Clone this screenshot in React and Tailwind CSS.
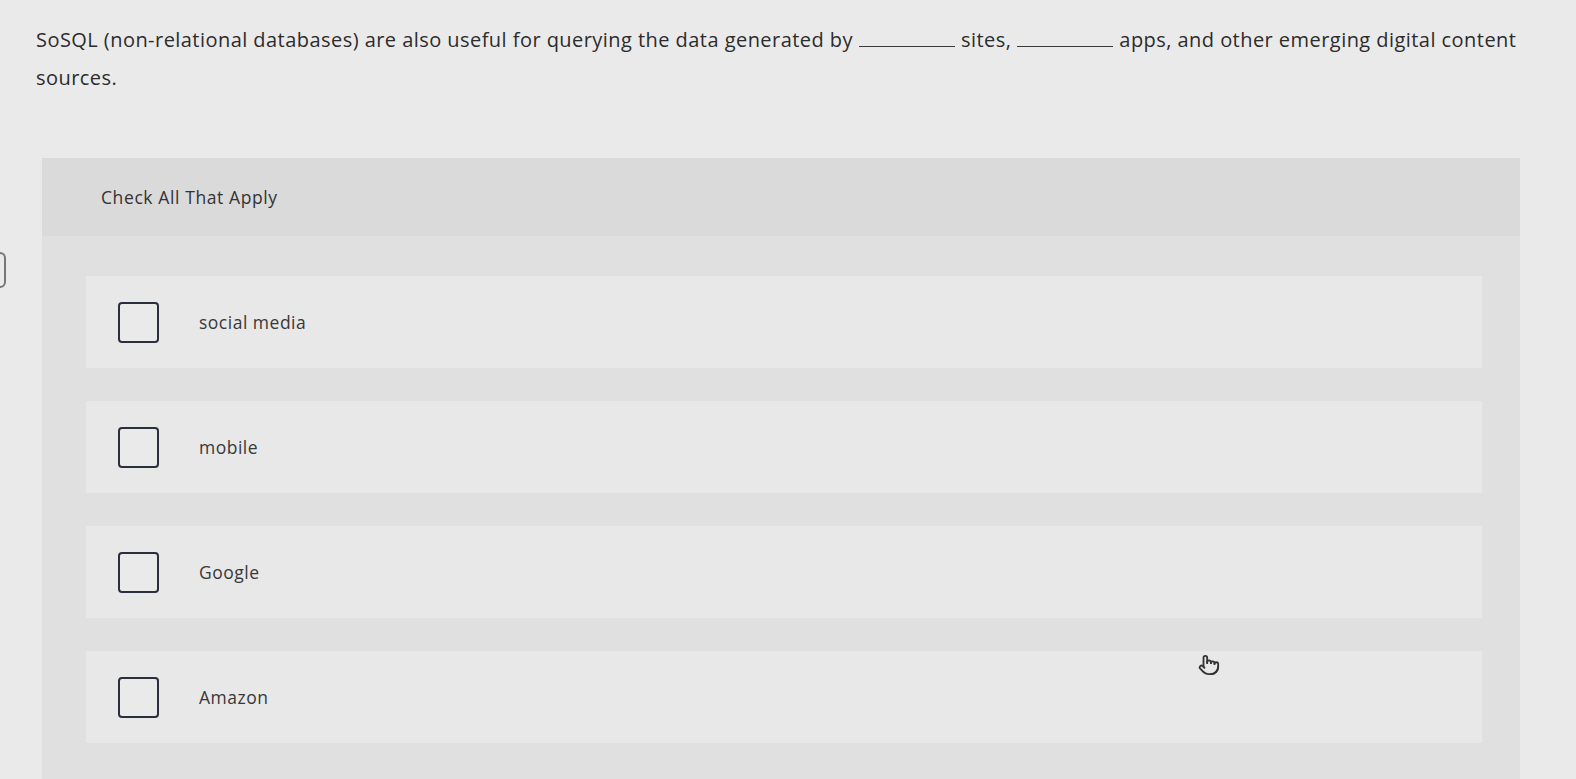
import React from "react";
import { Pointer } from "lucide-react";

const options = ["social media", "mobile", "Google", "Amazon"];

function Blank() {
  return <span className="inline-block align-baseline w-[96px] h-[1px] border-b-[1.5px] border-[#3a3a3a] mx-[6px]" />;
}

export default function App() {
  return (
    <div className="relative w-[1576px] h-[779px] overflow-hidden bg-[#ebeaea] font-['Open_Sans','Noto_Sans',sans-serif] text-[#2c2c2c]">
      <div className="w-[1530px] pl-[36px] pt-[21px] text-[20px] leading-[38px] tracking-[0.45px]">
        SoSQL (non-relational databases) are also useful for querying the data generated by
        <Blank />
        sites,
        <Blank />
        apps, and other emerging digital content sources.
      </div>

      <div className="ml-[42px] mr-[56px] mt-[61px] bg-[#e1e0e0] pb-[80px]">
        <div className="h-[78px] bg-[#dbdada] flex items-center pl-[59px] text-[17.5px] tracking-[0.6px] text-[#333]">
          Check All That Apply
        </div>
        <div className="flex flex-col gap-[33px] pt-[40px] pl-[44px] pr-[38px]">
          {options.map((o) => (
            <div key={o} className="h-[92px] bg-[#e8e8e8] flex items-center pl-[32px]">
              <div className="w-[41px] h-[41px] border-[2.5px] border-[#2b2e3c] rounded-[4px] bg-[#eaeaea] shrink-0" />
              <span className="ml-[40px] text-[17.5px] tracking-[0.5px] text-[#383838]">{o}</span>
            </div>
          ))}
        </div>
      </div>

      <div className="absolute left-[1198px] top-[654px] text-[#333]">
        <Pointer size={22} strokeWidth={2} />
      </div>
      <div className="absolute left-[-6px] top-[252px] w-[12px] h-[36px] border-[2px] border-[#777] rounded-[6px]" />
    </div>
  );
}
